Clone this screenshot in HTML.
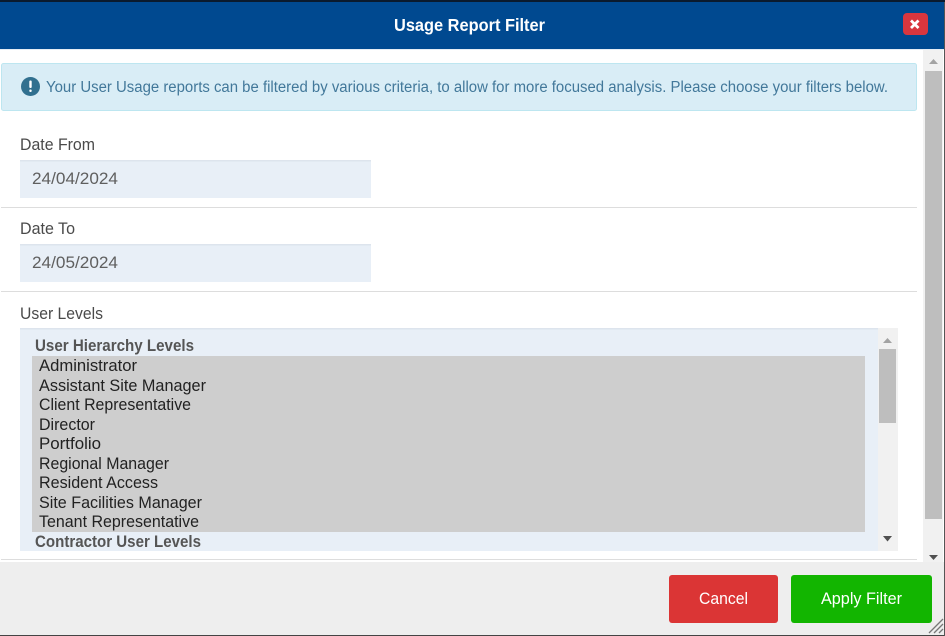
<!DOCTYPE html>
<html><head><meta charset="utf-8"><style>
html,body{margin:0;padding:0;background:#fff;width:945px;height:636px;overflow:hidden}
svg{display:block}
text{font-family:"Liberation Sans",Arial,sans-serif}
.l{font-size:16.5px;fill:#4a4a4a}
.v{font-size:16.5px;fill:#5f5f5f}
.o{font-size:16.5px;fill:#222}
.g{font-size:16.5px;font-weight:bold;fill:#555}
</style></head><body>
<svg width="945" height="636" viewBox="0 0 945 636" xmlns="http://www.w3.org/2000/svg">
<rect width="945" height="636" fill="#fff"/>
<rect width="945" height="2" fill="#0a1a2e"/>
<rect y="2" width="945" height="47" fill="#004990"/>
<rect y="49" width="945" height="1" fill="#e6edf4"/>
<text x="394" y="31" font-size="17.500" font-weight="bold" fill="#fff" textLength="151" lengthAdjust="spacingAndGlyphs">Usage Report Filter</text>
<rect x="903" y="13" width="25" height="22" rx="4" fill="#d9363e"/>
<path d="M911 20.500L918.500 28M918.500 20.500L911 28" stroke="#fff" stroke-width="2.800"/>

<rect x="1.500" y="63.500" width="915" height="47" rx="2" fill="#d9edf6" stroke="#bde6f0"/>
<circle cx="30.500" cy="86.500" r="9.500" fill="#31708f"/>
<rect x="29.300" y="80.500" width="2.400" height="7.500" rx="1" fill="#fff"/>
<rect x="29.300" y="89.500" width="2.400" height="2.500" rx="1" fill="#fff"/>
<text x="46" y="92" font-size="15.500" fill="#42789a" textLength="842" lengthAdjust="spacingAndGlyphs">Your User Usage reports can be filtered by various criteria, to allow for more focused analysis. Please choose your filters below.</text>

<text class="l" x="20" y="150" textLength="75" lengthAdjust="spacingAndGlyphs">Date From</text>
<rect x="20" y="160" width="351" height="38" fill="#e8eff7"/>
<rect x="20" y="160" width="351" height="1.500" fill="#dde4ed"/>
<text class="v" x="32" y="184" textLength="86" lengthAdjust="spacingAndGlyphs">24/04/2024</text>
<rect x="1" y="207" width="916" height="1" fill="#ddd"/>

<text class="l" x="20" y="234" textLength="55" lengthAdjust="spacingAndGlyphs">Date To</text>
<rect x="20" y="244" width="351" height="38" fill="#e8eff7"/>
<rect x="20" y="244" width="351" height="1.500" fill="#dde4ed"/>
<text class="v" x="32" y="268" textLength="86" lengthAdjust="spacingAndGlyphs">24/05/2024</text>
<rect x="1" y="291" width="916" height="1" fill="#ddd"/>

<text class="l" x="20" y="319" textLength="83" lengthAdjust="spacingAndGlyphs">User Levels</text>
<rect x="20" y="328" width="858" height="223" fill="#e8eff7"/>
<rect x="20" y="328" width="858" height="1.500" fill="#dde4ed"/>
<rect x="32" y="356" width="833" height="176" fill="#cecece"/>
<text class="g" x="35" y="351" textLength="159" lengthAdjust="spacingAndGlyphs">User Hierarchy Levels</text>
<text class="o" x="39" y="371" textLength="98" lengthAdjust="spacingAndGlyphs">Administrator</text>
<text class="o" x="39" y="391" textLength="167" lengthAdjust="spacingAndGlyphs">Assistant Site Manager</text>
<text class="o" x="39" y="410" textLength="152" lengthAdjust="spacingAndGlyphs">Client Representative</text>
<text class="o" x="39" y="430" textLength="56" lengthAdjust="spacingAndGlyphs">Director</text>
<text class="o" x="39" y="449" textLength="62" lengthAdjust="spacingAndGlyphs">Portfolio</text>
<text class="o" x="39" y="469" textLength="130" lengthAdjust="spacingAndGlyphs">Regional Manager</text>
<text class="o" x="39" y="488" textLength="119" lengthAdjust="spacingAndGlyphs">Resident Access</text>
<text class="o" x="39" y="508" textLength="163" lengthAdjust="spacingAndGlyphs">Site Facilities Manager</text>
<text class="o" x="39" y="527" textLength="160" lengthAdjust="spacingAndGlyphs">Tenant Representative</text>
<text class="g" x="35" y="547" textLength="166" lengthAdjust="spacingAndGlyphs">Contractor User Levels</text>

<rect x="878" y="328" width="20" height="223" fill="#f1f1f1"/>
<rect x="879" y="349" width="17" height="74" fill="#bebebe"/>
<path d="M883 343L892 343L887.500 338Z" fill="#a3a3a3"/>
<path d="M883 536L892 536L887.500 541.500Z" fill="#505050"/>
<rect x="1" y="559" width="916" height="1" fill="#ddd"/>

<rect x="923" y="50" width="20" height="512" fill="#f1f1f1"/>
<rect x="925" y="71" width="17" height="448" fill="#bebebe"/>
<path d="M929 64L938 64L933.500 59Z" fill="#a3a3a3"/>
<path d="M929 555L938 555L933.500 560Z" fill="#505050"/>

<rect y="562" width="945" height="73" fill="#eee"/>
<rect y="635" width="945" height="1" fill="#444"/>
<rect x="944" y="2" width="1" height="634" fill="#555"/>
<rect x="669" y="575" width="109" height="48" rx="3" fill="#db3535"/>
<text x="699" y="604" font-size="16.500" fill="#fff" textLength="49" lengthAdjust="spacingAndGlyphs">Cancel</text>
<rect x="791" y="575" width="141" height="48" rx="3" fill="#12b500"/>
<text x="821" y="604" font-size="16.500" fill="#fff" textLength="81" lengthAdjust="spacingAndGlyphs">Apply Filter</text>
<path d="M929 633L943 619M934 633L943 624M939 633L943 629" stroke="#777" stroke-width="1.300" fill="none"/>
</svg>
</body></html>
